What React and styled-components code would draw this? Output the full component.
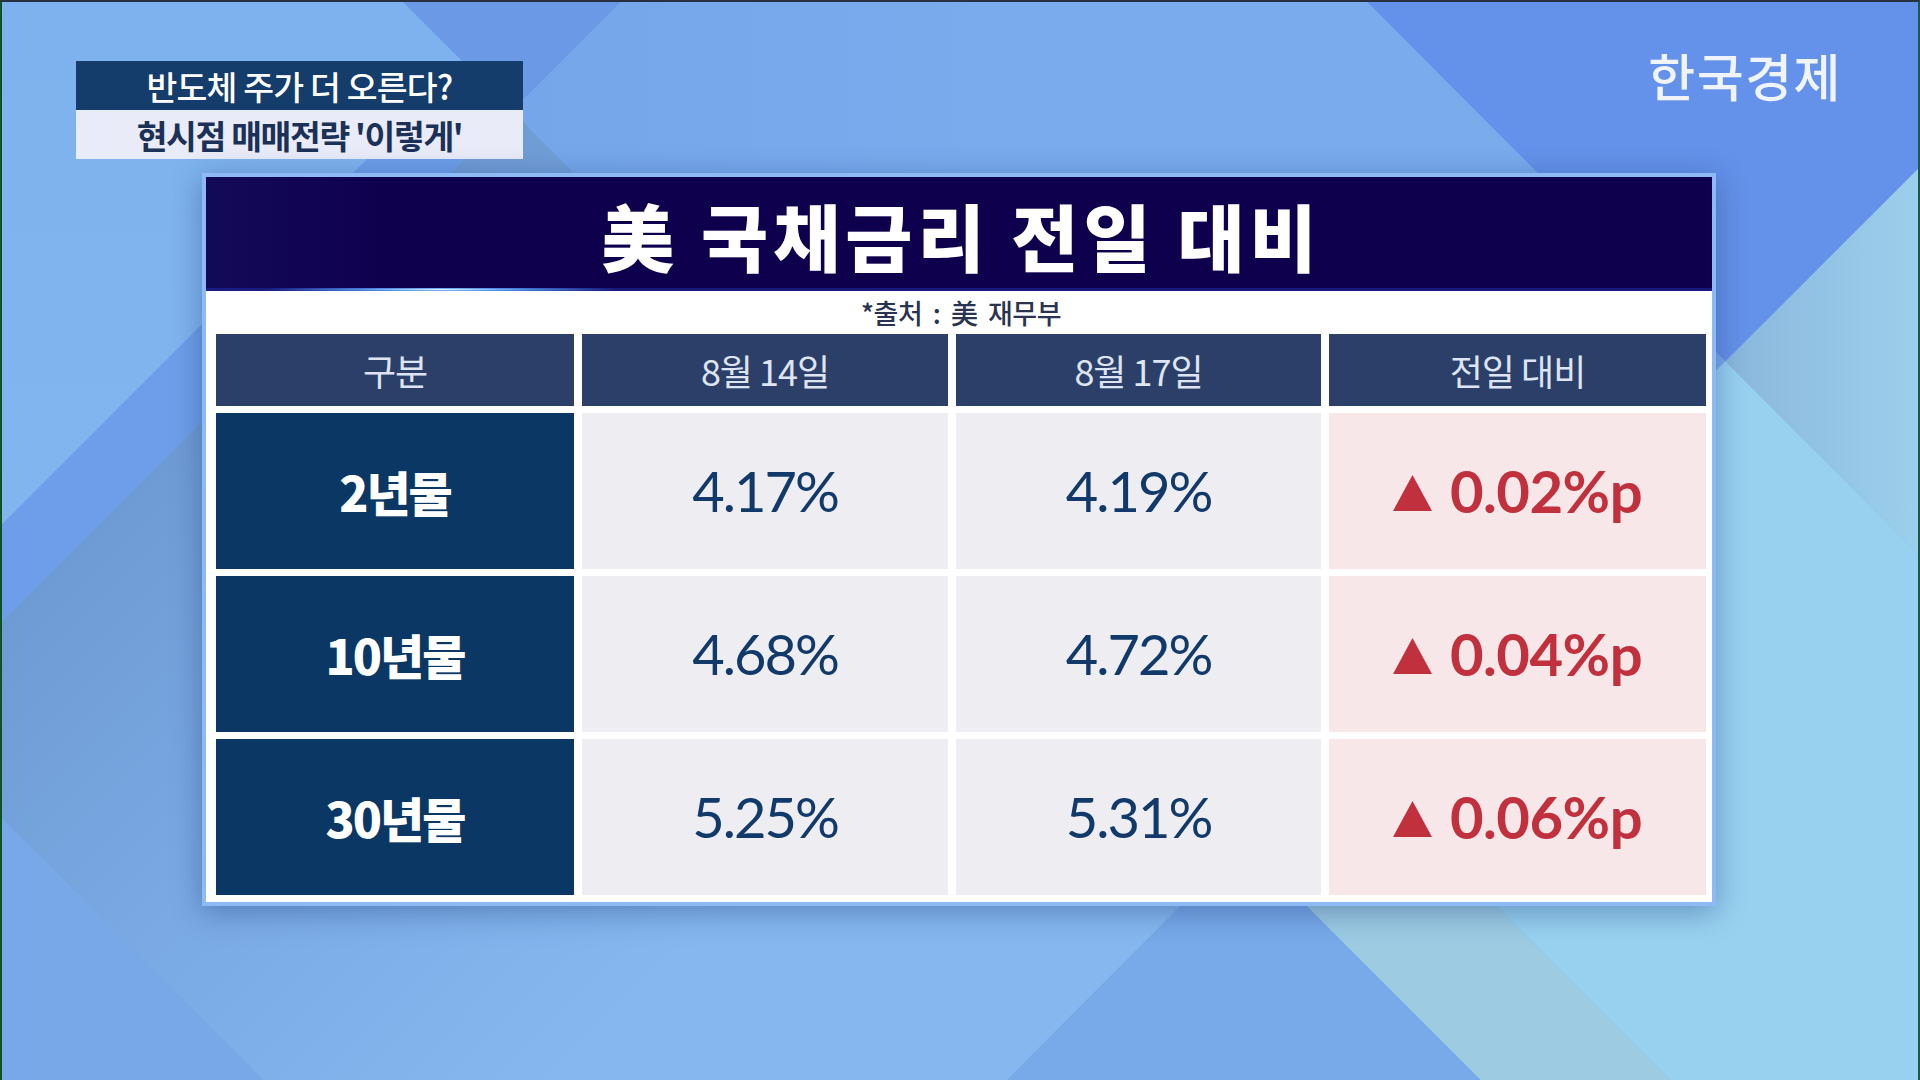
import React from "react";
import styled, { createGlobalStyle } from "styled-components";

const GlobalStyle = createGlobalStyle`
  html, body { margin: 0; padding: 0; }
  body { width: 1920px; height: 1080px; overflow: hidden; font-family: "Noto Sans CJK KR", "Noto Sans", sans-serif; }
  * { box-sizing: border-box; }
`;

const bgSvg = `<svg xmlns='http://www.w3.org/2000/svg' viewBox='0 0 1920 1080' preserveAspectRatio='none'>
<defs>
<linearGradient id='base' x1='0' y1='0' x2='0' y2='1'><stop offset='0' stop-color='#7db2ee'/><stop offset='1' stop-color='#86b9ef'/></linearGradient>
<linearGradient id='lower' gradientUnits='userSpaceOnUse' x1='310' y1='310' x2='820' y2='820'><stop offset='0' stop-color='#6f9bd4'/><stop offset='0.55' stop-color='#7cace6'/><stop offset='1' stop-color='#86b8ef'/></linearGradient>
<linearGradient id='dia' gradientUnits='userSpaceOnUse' x1='402' y1='0' x2='1000' y2='0'><stop offset='0' stop-color='#74a5ea'/><stop offset='1' stop-color='#7aabed'/></linearGradient>
<linearGradient id='gc' gradientUnits='userSpaceOnUse' x1='1727' y1='360' x2='1920' y2='360'><stop offset='0' stop-color='#8ab7dc'/><stop offset='1' stop-color='#9ccfec'/></linearGradient>
</defs>
<rect width='1920' height='1080' fill='url(#base)'/>
<polygon points='0,620 511,109 1482,1080 0,1080' fill='url(#lower)'/>
<polygon points='402,0 1368,0 1727,360 1244,842' fill='url(#dia)'/>
<polygon points='402,0 620,0 511,109' fill='#6b99e6'/>
<polygon points='0,523 462,61 511,109 0,620' fill='#6e9ee9'/>
<polygon points='1244,842 1482,1080 1007,1080' fill='#78a9e8'/>
<polygon points='1339,747 1672,1080 1482,1080 1244,842' fill='#9ccbe2'/>
<polygon points='1339,747 1727,360 1920,553 1920,1080 1672,1080' fill='#98d1f0'/>
<polygon points='1727,360 1920,167 1920,553' fill='url(#gc)'/>
<polygon points='1368,0 1920,0 1920,167 1727,360' fill='#6491e9'/>
<polygon points='0,818 262,1080 0,1080' fill='#78a8e8'/>
</svg>`;

const bgUrl = `url("data:image/svg+xml,${encodeURIComponent(bgSvg)}")`;

const Stage = styled.div`
  width: 1920px;
  height: 1080px;
  padding-top: 48px;
  border-top: 2px solid #27313f;
  border-left: 2px solid #0f5226;
  border-right: 2px solid #1c5a44;
  background: ${bgUrl} center / 100% 100% no-repeat;
  display: flex;
  flex-direction: column;
`;

const TopBar = styled.div`
  display: flex;
  justify-content: space-between;
  align-items: flex-start;
  padding: 0 77px 0 74px;
`;

const Headline = styled.div`
  margin-top: 11px;
  width: 447px;
  display: flex;
  flex-direction: column;
`;

const HeadlineRow = styled.div`
  height: 49px;
  display: flex;
  align-items: center;
  justify-content: center;
  background: ${(p) => (p.$dark ? "#143d6c" : "#e9ebf8")};
  color: ${(p) => (p.$dark ? "#ffffff" : "#1b3158")};
  font-family: "Noto Sans CJK KR", sans-serif;
  font-size: 33.5px;
  font-weight: ${(p) => (p.$dark ? 500 : 600)};
  letter-spacing: ${(p) => (p.$dark ? "-0.8px" : "-1.4px")};
  line-height: 1;
  white-space: nowrap;
`;

const Logo = styled.div`
  font-family: "Noto Sans CJK KR", sans-serif;
  font-size: 51px;
  font-weight: 500;
  letter-spacing: 1.5px;
  line-height: 1;
  color: #eef3fc;
  margin-right: -1px;
`;

const Panel = styled.div`
  margin: 14px 0 0 200px;
  width: 1514px;
  border: 4px solid #8dbaf4;
  background: #ffffff;
  box-shadow: 0 6px 28px rgba(25, 55, 115, 0.4);
  display: flex;
  flex-direction: column;
`;

const TitleBar = styled.div`
  position: relative;
  height: 114px;
  background: linear-gradient(90deg, #130a57 0%, #0f004e 12%, #0e004c 100%);
  display: flex;
  align-items: center;
  justify-content: center;
  &::after {
    content: "";
    position: absolute;
    left: 0;
    right: 0;
    bottom: 0;
    height: 3px;
    background: radial-gradient(ellipse 180px 3px at 235px 50%, #d8f2ff 0%, #4f8fe8 45%, rgba(30, 40, 160, 0.6) 100%);
  }
`;

const Title = styled.h1`
  margin: 0;
  font-family: "Noto Sans CJK KR", sans-serif;
  font-size: 73px;
  font-weight: 900;
  letter-spacing: 5px;
  margin-right: -5px;
  line-height: 1;
  color: #ffffff;
`;

const Body = styled.div`
  padding: 0 6px 7px 10px;
  display: flex;
  flex-direction: column;
`;

const Source = styled.div`
  height: 43px;
  display: flex;
  align-items: center;
  justify-content: center;
  font-family: "Noto Sans CJK KR", sans-serif;
  font-size: 27px;
  font-weight: 500;
  color: #2a3350;
  letter-spacing: -0.5px;
  word-spacing: 5px;
  white-space: pre;
`;

const Grid = styled.div`
  display: grid;
  grid-template-columns: 358px 366px 365px 377px;
  grid-template-rows: 72px 156px 156px 156px;
  column-gap: 8px;
  row-gap: 7px;
`;

const kinds = {
  head: { bg: "#2c3f69", color: "#dde4f2" },
  label: { bg: "#0b3765", color: "#ffffff" },
  value: { bg: "#eeedf2", color: "#113a6a" },
  change: { bg: "#f8e7e8", color: "#c1303d" },
};

const Cell = styled.div`
  display: flex;
  align-items: center;
  justify-content: center;
  background: ${(p) => kinds[p.$kind].bg};
  color: ${(p) => kinds[p.$kind].color};
  line-height: 1;
  white-space: nowrap;
`;

const HeadText = styled.span`
  font-family: "Noto Sans CJK KR", sans-serif;
  font-size: 36px;
  font-weight: 400;
  letter-spacing: -1px;
`;

const LabelText = styled.span`
  font-family: "Noto Sans CJK KR", sans-serif;
  font-size: 48px;
  font-weight: 900;
  letter-spacing: -2px;
`;

const ValueText = styled.span`
  font-family: Lato, "Noto Sans", sans-serif;
  font-size: 56px;
  font-weight: 400;
  letter-spacing: -2px;
`;

const ChangeText = styled.span`
  display: flex;
  align-items: center;
  gap: 18px;
  font-family: Lato, "Noto Sans", sans-serif;
  font-size: 58px;
  font-weight: 700;
  letter-spacing: -0.5px;
`;

const Arrow = styled.svg`
  width: 39px;
  height: 36px;
  margin-top: 4px;
  flex: none;
`;

const headers = ["구분", "8월 14일", "8월 17일", "전일 대비"];
const rows = [
  { label: "2년물", a: "4.17%", b: "4.19%", d: "0.02%p" },
  { label: "10년물", a: "4.68%", b: "4.72%", d: "0.04%p" },
  { label: "30년물", a: "5.25%", b: "5.31%", d: "0.06%p" },
];

export default function App() {
  return (
    <>
      <GlobalStyle />
      <Stage>
        <TopBar>
          <Headline>
            <HeadlineRow $dark>반도체 주가 더 오른다?</HeadlineRow>
            <HeadlineRow>현시점 매매전략 '이렇게'</HeadlineRow>
          </Headline>
          <Logo>한국경제</Logo>
        </TopBar>
        <Panel>
          <TitleBar>
            <Title>美 국채금리 전일 대비</Title>
          </TitleBar>
          <Body>
            <Source>*출처 : 美 재무부</Source>
            <Grid>
              {headers.map((h) => (
                <Cell key={h} $kind="head">
                  <HeadText>{h}</HeadText>
                </Cell>
              ))}
              {rows.map((r) => (
                <React.Fragment key={r.label}>
                  <Cell $kind="label">
                    <LabelText>{r.label}</LabelText>
                  </Cell>
                  <Cell $kind="value">
                    <ValueText>{r.a}</ValueText>
                  </Cell>
                  <Cell $kind="value">
                    <ValueText>{r.b}</ValueText>
                  </Cell>
                  <Cell $kind="change">
                    <ChangeText>
                      <Arrow viewBox="0 0 39 36" aria-label="▲">
                        <polygon points="19.5,0 39,36 0,36" fill="#c1303d" />
                      </Arrow>
                      {r.d}
                    </ChangeText>
                  </Cell>
                </React.Fragment>
              ))}
            </Grid>
          </Body>
        </Panel>
      </Stage>
    </>
  );
}
